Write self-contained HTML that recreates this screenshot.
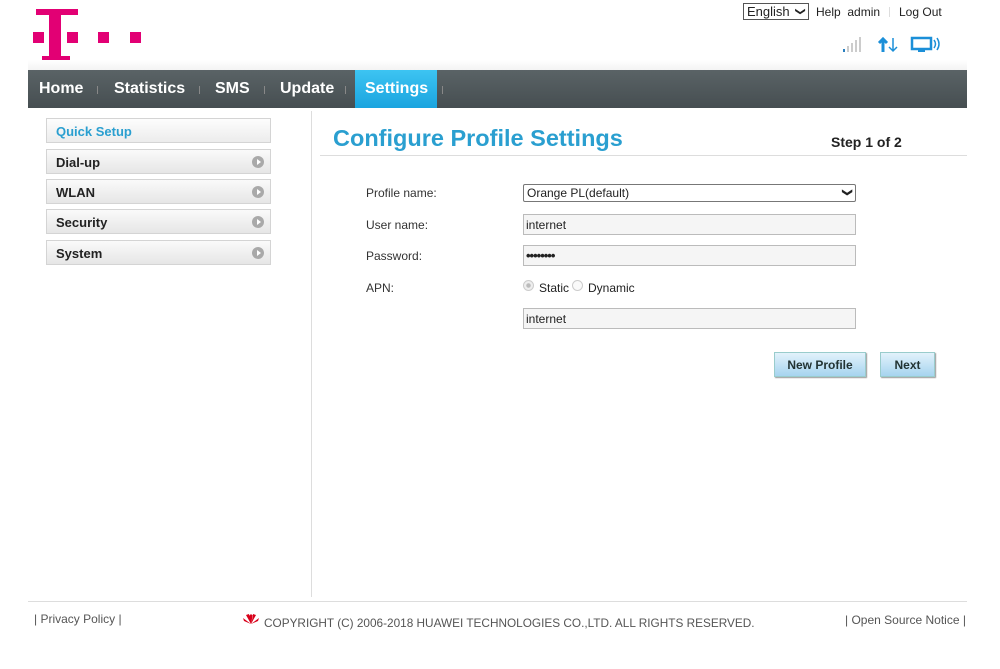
<!DOCTYPE html>
<html><head><meta charset="utf-8"><style>
*{margin:0;padding:0;box-sizing:border-box}
body{width:1000px;height:669px;background:#fff;font-family:"Liberation Sans",Arial,sans-serif;position:relative;overflow:hidden;color:#222}
.a{position:absolute}
.mag{background:#e20074;position:absolute}
.nav{left:28px;top:70px;width:939px;height:38px;background:linear-gradient(#5a6366,#464e51)}
.nav span{position:absolute;top:10px;color:#fff;font-weight:bold;font-size:16px}
.sep{position:absolute;top:16px;width:1px;height:8px;background:#888}
.side{position:absolute;left:46px;width:225px;height:25px;border:1px solid #d4d4d4;background:linear-gradient(#fafafa,#e6e6e6);font-weight:bold;font-size:13px;padding:5px 9px}
.side i{position:absolute;right:6px;top:6px;width:12px;height:12px;border-radius:50%;background:#a9a9a9}
.side i:after{content:"";position:absolute;left:5px;top:3px;border-left:4px solid #fff;border-top:3px solid transparent;border-bottom:3px solid transparent}
.lbl{position:absolute;left:366px;font-size:12px;color:#333}
.inp{position:absolute;left:523px;width:333px;height:21px;border:1px solid #bbb;background:#f5f5f5;font-size:12px;padding:3px 2px}
.btn{position:absolute;top:352px;height:25px;border:1px solid #9cc;background:linear-gradient(#e2f2fb,#a6d4ef);font-weight:bold;font-size:12px;text-align:center;padding-top:5px;color:#233;box-shadow:1px 1px 1px #999}
.ft{position:absolute;font-size:12px;color:#555}
</style></head><body>
<div class="mag" style="left:36px;top:9px;width:42px;height:6px"></div>
<div class="mag" style="left:49px;top:9px;width:12px;height:50px"></div>
<div class="mag" style="left:42px;top:56px;width:28px;height:5px"></div>
<div class="mag" style="left:33px;top:32px;width:11px;height:11px"></div>
<div class="mag" style="left:67px;top:32px;width:11px;height:11px"></div>
<div class="mag" style="left:98px;top:32px;width:11px;height:11px"></div>
<div class="mag" style="left:130px;top:32px;width:11px;height:11px"></div>

<div class="a" style="left:743px;top:3px;width:66px;height:17px;border:1px solid #555;font-size:13px;padding:0 3px">English <span style="font-size:10px;position:absolute;right:4px;top:2px;transform:rotate(90deg)">&#10095;</span></div>
<div class="a" style="left:816px;top:5px;font-size:12px">Help&nbsp;&nbsp;admin</div>
<div class="a" style="left:889px;top:7px;width:1px;height:10px;background:#ddd"></div>
<div class="a" style="left:899px;top:5px;font-size:12px">Log Out</div>
<svg class="a" style="left:843px;top:36px" width="100" height="20">
<rect x="0" y="13" width="2" height="3" fill="#2a7fbf"/><rect x="4" y="10" width="2" height="6" fill="#ccc"/><rect x="8" y="7" width="2" height="9" fill="#ccc"/><rect x="12" y="4" width="2" height="12" fill="#ccc"/><rect x="16" y="1" width="2" height="15" fill="#ccc"/>
<path d="M40 16V3M36 7l4-4 4 4" stroke="#1b8fd8" stroke-width="3" fill="none"/>
<path d="M50 2v13M46 11l4 4 4-4" stroke="#1b8fd8" stroke-width="1.5" fill="none"/>
<rect x="69" y="2" width="19" height="11" fill="none" stroke="#1b8fd8" stroke-width="2.5"/><rect x="75" y="14" width="7" height="2" fill="#1b8fd8"/>
<path d="M91 4q3 4 0 8M94 2q4 6 0 12" stroke="#1b8fd8" stroke-width="1.5" fill="none"/>
</svg>
<div class="a" style="left:28px;top:60px;width:939px;height:10px;background:linear-gradient(#fff,#f3f3f3)"></div>

<div class="a nav">
<span style="left:11px">Home</span><div class="sep" style="left:69px"></div>
<span style="left:86px">Statistics</span><div class="sep" style="left:171px"></div>
<span style="left:187px">SMS</span><div class="sep" style="left:236px"></div>
<div class="a" style="left:327px;top:0;width:82px;height:38px;background:linear-gradient(#3dc4f2,#1aa4df)"></div>
<span style="left:252px">Update</span><div class="sep" style="left:317px"></div>
<span style="left:337px">Settings</span><div class="sep" style="left:414px"></div>
</div>

<div class="side" style="top:118px;color:#2a9fd0;background:linear-gradient(#fdfdfd,#ececec)">Quick Setup</div>
<div class="side" style="top:149px">Dial-up<i></i></div>
<div class="side" style="top:179px">WLAN<i></i></div>
<div class="side" style="top:209px">Security<i></i></div>
<div class="side" style="top:240px">System<i></i></div>
<div class="a" style="left:311px;top:111px;width:1px;height:486px;background:#ddd"></div>

<div class="a" style="left:333px;top:125px;font-size:23.5px;font-weight:bold;color:#2a9fd0">Configure Profile Settings</div>
<div class="a" style="left:831px;top:134px;font-size:14px;font-weight:bold">Step 1 of 2</div>
<div class="a" style="left:320px;top:155px;width:647px;height:1px;background:#ddd"></div>

<div class="lbl" style="top:186px">Profile name:</div>
<div class="inp" style="top:184px;height:18px;padding:1px 3px;background:#fff;border-color:#777;border-radius:2px">Orange PL(default)<span style="position:absolute;right:4px;top:2px;font-size:10px;font-weight:bold;transform:rotate(90deg)">&#10095;</span></div>
<div class="lbl" style="top:218px">User name:</div>
<div class="inp" style="top:214px">internet</div>
<div class="lbl" style="top:249px">Password:</div>
<div class="inp" style="top:245px;font-weight:bold;font-size:13px;letter-spacing:-1px;padding-top:2px">••••••••</div>
<div class="lbl" style="top:281px">APN:</div>
<div class="a" style="left:523px;top:280px;width:11px;height:11px;border-radius:50%;border:1px solid #ccc;background:radial-gradient(#bbb 30%,#eee 40%)"></div>
<div class="a" style="left:539px;top:281px;font-size:12px">Static</div>
<div class="a" style="left:572px;top:280px;width:11px;height:11px;border-radius:50%;border:1px solid #ccc;background:#fafafa"></div>
<div class="a" style="left:588px;top:281px;font-size:12px">Dynamic</div>
<div class="inp" style="top:308px">internet</div>
<div class="btn" style="left:774px;width:92px">New Profile</div>
<div class="btn" style="left:880px;width:55px">Next</div>

<div class="a" style="left:28px;top:601px;width:939px;height:1px;background:#ddd"></div>
<div class="ft" style="left:34px;top:612px">|&nbsp;Privacy Policy&nbsp;|</div>
<svg class="a" style="left:242px;top:613px" width="18" height="12"><path d="M9 11L4 2 7 1zM9 11L14 2 11 1zM9 11L1 5 2 8zM9 11L17 5 16 8zM9 11L7 3 9 1 11 3z" fill="#d8001a"/></svg>
<div class="ft" style="left:264px;top:616px;font-size:11.8px">COPYRIGHT (C) 2006-2018 HUAWEI TECHNOLOGIES CO.,LTD. ALL RIGHTS RESERVED.</div>
<div class="ft" style="left:845px;top:613px">|&nbsp;Open Source Notice&nbsp;|</div>
</body></html>
